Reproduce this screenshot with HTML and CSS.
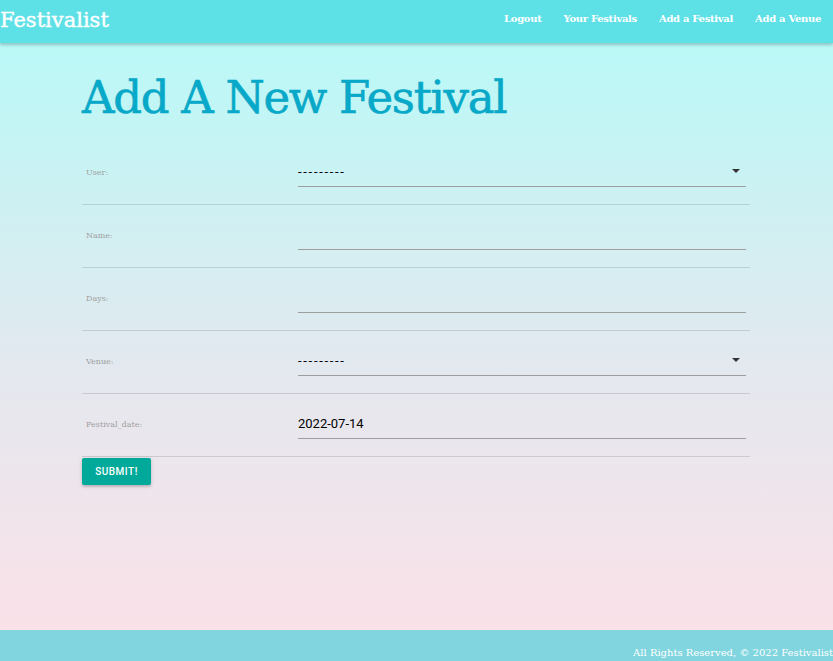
FILE: index.html
```html
<!DOCTYPE html>
<html lang="en">
<head>
<meta charset="utf-8">
<title>Festivalist</title>
<link rel="stylesheet" href="styles.css">
</head>
<body>
<header class="nav">
  <a class="logo" href="#">Festivalist</a>
  <ul class="nav-links">
    <li><a href="#">Logout</a></li>
    <li><a href="#">Your Festivals</a></li>
    <li><a href="#">Add a Festival</a></li>
    <li><a href="#">Add a Venue</a></li>
  </ul>
</header>
<main class="container">
  <h1 class="title">Add A New Festival</h1>
  <form class="form">
    <div class="row">
      <label class="label">User:</label>
      <div class="field select"><span class="dashes">---------</span><span class="caret"></span></div>
    </div>
    <div class="row">
      <label class="label">Name:</label>
      <div class="field"></div>
    </div>
    <div class="row">
      <label class="label">Days:</label>
      <div class="field"></div>
    </div>
    <div class="row">
      <label class="label">Venue:</label>
      <div class="field select"><span class="dashes">---------</span><span class="caret"></span></div>
    </div>
    <div class="row">
      <label class="label">Festival_date:</label>
      <div class="field"><span class="value">2022-07-14</span></div>
    </div>
    <button class="btn" type="button">Submit!</button>
  </form>
</main>
<footer class="footer">
  <span class="copy">All Rights Reserved, © 2022 Festivalist</span>
</footer>
</body>
</html>
```
FILE: styles.css
```css
* { box-sizing: border-box; }
html, body { margin: 0; padding: 0; }
body {
  min-height: 661px;
  display: flex;
  flex-direction: column;
  font-family: "DejaVu Serif", serif;
  background: linear-gradient(to bottom, #b4fbf8 0px, #e5e8ef 380px, #fde0e7 661px);
}
a { text-decoration: none; color: inherit; }
.nav {
  height: 43px;
  background: #5ee1e6;
  display: flex;
  align-items: center;
  justify-content: space-between;
  box-shadow: 0 2px 3px rgba(0,0,0,0.22);
  position: relative;
  z-index: 2;
}
.logo {
  color: #fff;
  font-size: 21px;
  padding-left: 0;
  margin-top: -4px;
  -webkit-text-stroke: 0.4px #fff;
}
.nav-links {
  list-style: none;
  margin: 0;
  padding: 0 1px 0 0;
  display: flex;
}
.nav-links a {
  display: block;
  color: #fff;
  font-size: 10px;
  font-weight: bold;
  letter-spacing: -0.3px;
  padding: 0 11px;
  margin-top: -6px;
}
.container {
  flex: 1;
  padding: 0 83px 0 82px;
}
.title {
  margin: 0;
  padding-top: 28px;
  height: 99px;
  color: #08a8c8;
  font-weight: normal;
  font-size: 45px;
  letter-spacing: -1.3px;
  line-height: 54px;
  -webkit-text-stroke: 0.6px #08a8c8;
}
.row {
  display: grid;
  grid-template-columns: 212px 1fr;
  padding: 0 4px;
  height: 63px;
  border-bottom: 1px solid rgba(0,0,0,0.12);
  align-items: start;
}
.label {
  font-size: 8px;
  color: #9e9e9e;
  line-height: 10px;
  margin-top: 26px;
}
.field {
  margin-top: 14px;
  height: 31px;
  border-bottom: 1px solid #9e9e9e;
  display: flex;
  align-items: center;
  justify-content: space-between;
  font-family: Roboto, sans-serif;
  font-size: 13px;
  color: #000;
}
.dashes { letter-spacing: 1.7px; }
.caret {
  width: 0;
  height: 0;
  border-left: 4px solid transparent;
  border-right: 4px solid transparent;
  border-top: 4px solid #333;
  margin-right: 6px;
}
.btn {
  margin-top: 1px;
  width: 69px;
  height: 27px;
  border: none;
  border-radius: 2px;
  background: #00a99a;
  color: #fff;
  font-family: Roboto, sans-serif;
  font-size: 10px;
  font-weight: 500;
  letter-spacing: 0.5px;
  text-transform: uppercase;
  box-shadow: 0 2px 2px rgba(0,0,0,0.14), 0 1px 5px rgba(0,0,0,0.12);
  padding: 0;
}
.footer {
  height: 31px;
  background: #80d5de;
  display: flex;
  justify-content: flex-end;
  align-items: flex-end;
  overflow: hidden;
}
.copy {
  color: #fff;
  font-size: 10px;
  white-space: nowrap;
  padding-bottom: 3px;
}
```
